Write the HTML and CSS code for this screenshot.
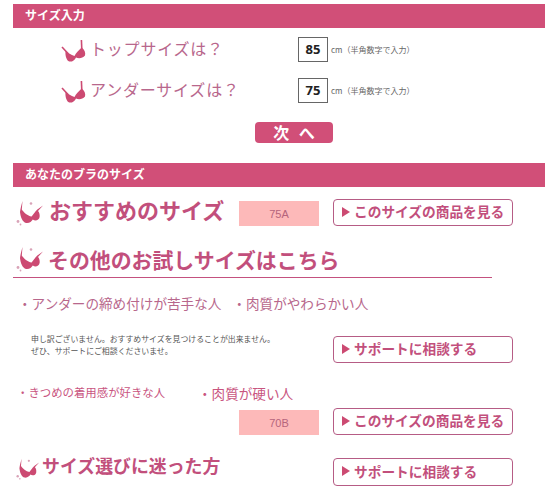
FILE: index.html
```html
<!DOCTYPE html>
<html lang="ja">
<head>
<meta charset="utf-8">
<title>サイズ入力</title>
<link rel="stylesheet" href="styles.css">
</head>
<body>
<svg class="defs" width="0" height="0" aria-hidden="true">
  <defs>
    <symbol id="bra" viewBox="0 0 26 24">
      <path d="M1 8 L7 14.5" fill="none" stroke="currentColor" stroke-width="1.6"/>
      <path d="M20.4 1 L20.8 10" fill="none" stroke="currentColor" stroke-width="1.6"/>
      <path d="M4.6 11.5 C7 14 10 16 13.5 17 C15 14 17.5 11.5 20.6 8.5 C23.6 10.5 24.8 14 24 16.5 C21.5 19.5 17.5 19.8 15 18.4 C13.5 22 9.5 23.6 7.3 22 C5 20 4 15.5 4.6 11.5 Z" fill="currentColor"/>
    </symbol>
    <symbol id="bra-sparkle" viewBox="0 0 28 28">
      <path d="M6.5 2 C5.5 6 4.5 9 4 13 C4.5 18 6.5 23 10 24 C13.5 24.5 15.5 22.5 16.8 20.5 C19.5 22.5 23 21 23.6 18 C24 15.5 23.2 13 22 12 L27 6.5 L21.3 10.5 C19 13 17 15.5 15.6 17.5 C11.5 17 8 13.5 5.8 10.5 Z" fill="currentColor"/>
      <circle cx="15" cy="4.5" r="1.3" fill="#d9a3b8"/>
      <circle cx="2" cy="22.5" r="1.4" fill="#d9a3b8"/>
      <circle cx="4.5" cy="25.5" r="0.9" fill="#d9a3b8"/>
    </symbol>
  </defs>
</svg>
<main class="page">
  <h2 class="bar">サイズ入力</h2>
  <form class="size-form">
    <div class="size-row">
      <svg class="bra"><use href="#bra"/></svg>
      <span class="size-label">トップサイズは？</span>
      <input class="size-input" type="text" value="85">
      <span class="size-note">cm（半角数字で入力）</span>
    </div>
    <div class="size-row">
      <svg class="bra"><use href="#bra"/></svg>
      <span class="size-label">アンダーサイズは？</span>
      <input class="size-input" type="text" value="75">
      <span class="size-note">cm（半角数字で入力）</span>
    </div>
    <div class="next-wrap"><a class="next">次 へ</a></div>
  </form>

  <h2 class="bar result-bar">あなたのブラのサイズ</h2>

  <section class="recommend">
    <svg class="sparkle"><use href="#bra-sparkle"/></svg>
    <h3 class="rec-title">おすすめのサイズ</h3>
    <div class="size-box rec-box">75A</div>
    <a class="link-btn rec-btn">このサイズの商品を見る</a>
  </section>

  <section class="other-head">
    <svg class="sparkle"><use href="#bra-sparkle"/></svg>
    <h3 class="other-title">その他のお試しサイズはこちら</h3>
  </section>

  <p class="type-line"><span>・アンダーの締め付けが苦手な人</span><span>・肉質がやわらかい人</span></p>

  <div class="sorry-row">
    <p class="sorry">申し訳ございません。おすすめサイズを見つけることが出来ません。<br>ぜひ、サポートにご相談くださいませ。</p>
    <a class="link-btn sorry-btn">サポートに相談する</a>
  </div>

  <div class="type-line2"><span class="t-small">・きつめの着用感が好きな人</span><span class="t-big">・肉質が硬い人</span></div>

  <div class="other-row">
    <div class="size-box">70B</div>
    <a class="link-btn">このサイズの商品を見る</a>
  </div>

  <section class="help">
    <svg class="sparkle"><use href="#bra-sparkle"/></svg>
    <h3 class="help-title">サイズ選びに迷った方</h3>
    <a class="link-btn help-btn">サポートに相談する</a>
  </section>
</main>
</body>
</html>
```
FILE: styles.css
```css
* { box-sizing: border-box; }
html, body { margin: 0; padding: 0; background: #fff; }
body {
  font-family: "Noto Sans CJK JP", "Noto Sans", sans-serif;
  color: #c94f78;
  height: 490px;
  overflow: hidden;
}
.defs { position: absolute; }
.page { width: 532px; margin-left: 13px; padding-top: 4px; }
.bar {
  margin: 0;
  height: 24px;
  padding-left: 12px;
  background: #d14f78;
  color: #fff;
  font-size: 12px;
  font-weight: 700;
  line-height: 22px;
}
.size-form { display: flex; flex-direction: column; }
.size-row {
  display: flex;
  align-items: center;
  height: 25px;
  margin-top: 9px;
  padding-left: 48px;
}
.size-row + .size-row { margin-top: 16px; }
.bra { width: 26px; height: 24px; color: #cc4a72; flex: none; margin-top: 2px; }
.size-label {
  width: 208px;
  margin-left: 3px;
  padding-bottom: 2px;
  color: #b8678c;
  font-size: 16px;
  letter-spacing: 0.8px;
  line-height: 23px;
  white-space: nowrap;
}
.size-input {
  width: 30px;
  height: 25px;
  margin: 0;
  padding: 0 0 2px;
  border: 1px solid #666;
  background: #fff;
  color: #222;
  font-family: "Noto Sans", sans-serif;
  font-size: 13px;
  font-weight: 700;
  text-align: center;
  outline: none;
}
.size-note {
  margin-left: 3px;
  color: #666;
  font-size: 8px;
  white-space: nowrap;
}
.next-wrap { display: flex; justify-content: center; margin-top: 19px; padding-left: 30px; }
.next {
  display: block;
  width: 78px;
  height: 21px;
  border-radius: 4px;
  background: #d14f78;
  color: #fff;
  font-size: 16px;
  font-weight: 700;
  line-height: 21px;
  text-align: center;
  word-spacing: 6px;
}
.result-bar { margin-top: 20px; }
.recommend {
  display: flex;
  align-items: flex-start;
  height: 27px;
  margin-top: 12px;
  padding-left: 3px;
}
.sparkle { width: 28px; height: 28px; color: #cc4a72; flex: none; }
.rec-title, .other-title, .help-title { margin: 0; font-weight: 700; color: #c24f7c; white-space: nowrap; }
.rec-title { width: 190px; margin-left: 5px; font-size: 22px; line-height: 21px; }
.size-box {
  width: 80px;
  height: 25px;
  background: #fdb9b9;
  color: #b5647c;
  font-family: "Liberation Sans", Arial, sans-serif;
  font-size: 11px;
  line-height: 26px;
  text-align: center;
}
.rec-box { margin-top: 2px; }
.link-btn {
  display: flex;
  align-items: center;
  width: 180px;
  height: 27px;
  padding: 0 0 2px 20px;
  border: 1px solid #b65c85;
  border-radius: 4px;
  background: #fff;
  color: #c24f7c;
  font-size: 13.7px;
  font-weight: 700;
  line-height: 23px;
  white-space: nowrap;
  position: relative;
}
.link-btn::before {
  content: "";
  position: absolute;
  left: 8px;
  top: 7px;
  border-left: 8px solid #cc4a72;
  border-top: 5.5px solid transparent;
  border-bottom: 5.5px solid transparent;
}
.rec-btn { margin-left: 14px; }
.other-head {
  display: flex;
  align-items: flex-start;
  width: 479px;
  height: 41px;
  margin-top: 11px;
  padding-left: 3px;
  border-bottom: 1px solid #c4517f;
}
.other-head .sparkle { margin-top: 8px; }
.other-title { margin-left: 4px; font-size: 20.9px; line-height: 30px; margin-top: 7px; }
.type-line {
  display: flex;
  gap: 11px;
  margin: 15px 0 0;
  padding-left: 5px;
  color: #b8678c;
  font-size: 13.6px;
  line-height: 20px;
  white-space: nowrap;
}
.sorry-row {
  display: flex;
  justify-content: space-between;
  align-items: flex-start;
  margin-top: 20px;
  padding-left: 18px;
  padding-right: 32px;
}
.sorry-btn { margin-top: 3px; }
.sorry {
  margin: 0;
  color: #555;
  font-size: 7.9px;
  line-height: 12px;
  white-space: nowrap;
}
.type-line2 {
  display: flex;
  align-items: flex-start;
  margin-top: 19px;
  padding-left: 4px;
  height: 26px;
  white-space: nowrap;
}
.t-small { width: 181px; font-size: 11.4px; line-height: 20px; color: #c9557f; }
.t-big { font-size: 13.6px; line-height: 23px; color: #c9557f; }
.other-row {
  display: flex;
  align-items: flex-start;
  gap: 14px;
  height: 27px;
  padding-left: 226px;
}
.other-row .size-box { margin-top: 2px; }
.help {
  display: flex;
  align-items: flex-start;
  height: 28px;
  margin-top: 23px;
  padding-left: 3px;
}
.help .sparkle { width: 24px; height: 24px; margin-top: -1px; }
.help-title { width: 291px; margin-left: 2px; font-size: 17.9px; line-height: 20px; margin-top: -3px; }
.help-btn { height: 28px; }
```
